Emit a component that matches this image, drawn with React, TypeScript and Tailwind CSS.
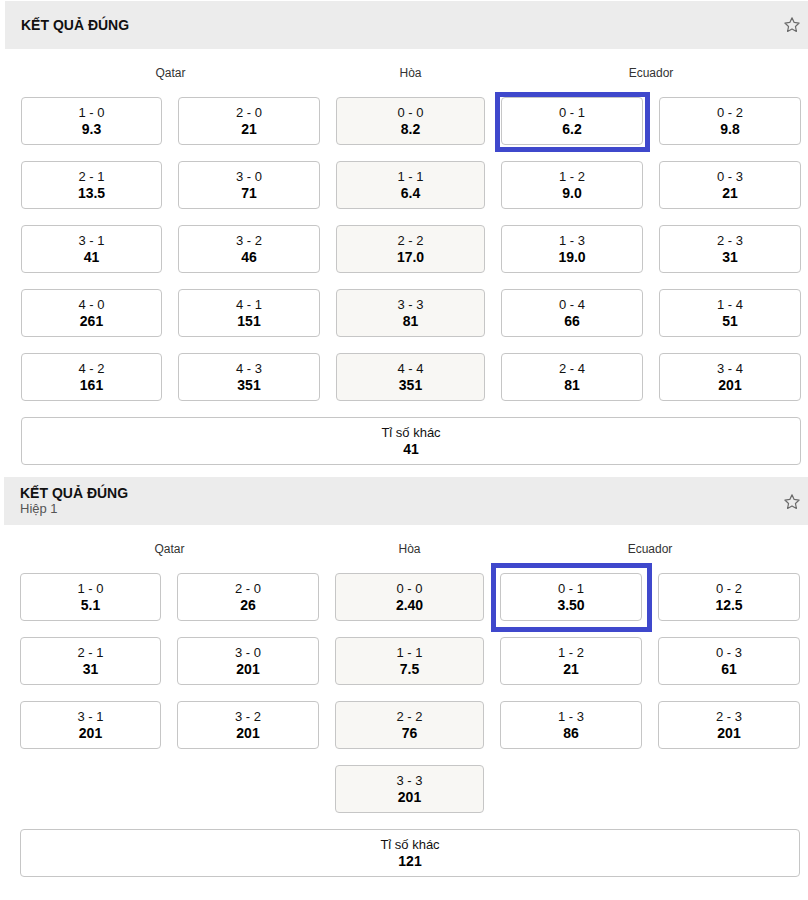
import React from "react";

type Cell = { s: string; o: string; draw?: boolean; sel?: 1 | 2; empty?: boolean };

const Star = () => (
  <svg width="18" height="18" viewBox="0 0 24 24" fill="none" stroke="#6b6b6b" strokeWidth="1.6" strokeLinejoin="round">
    <path d="M12 2.5l2.9 6.1 6.6.8-4.9 4.6 1.3 6.6L12 17.3l-5.9 3.3 1.3-6.6-4.9-4.6 6.6-.8z" />
  </svg>
);

const COLS = "grid grid-cols-[141px_142px_149px_142px_142px] gap-x-[16px]";

function OddCell({ c }: { c: Cell }) {
  if (c.empty) return <div />;
  return (
    <div
      className={
        "relative h-[48px] rounded-[4px] border border-[#c6c6c6] flex flex-col items-center justify-center " +
        (c.draw ? "bg-[#f8f7f4]" : "bg-white")
      }
    >
      {c.sel === 1 && (
        <span className="absolute left-[-7px] top-[-6px] right-[-8px] bottom-[-8px] border-[5px] border-[#3f48cc] pointer-events-none" />
      )}
      {c.sel === 2 && (
        <span className="absolute left-[-10px] top-[-11px] right-[-11px] bottom-[-12px] border-[5px] border-[#3f48cc] pointer-events-none" />
      )}
      <div className="text-[13px] leading-[16px] text-[#111]">{c.s}</div>
      <div className="text-[14px] leading-[16px] font-bold text-black">{c.o}</div>
    </div>
  );
}

function Section({
  sub,
  rows,
  other,
  padL,
}: {
  sub?: string;
  rows: Cell[][];
  other: string;
  padL: string;
}) {
  return (
    <div className={padL}>
      <div className="h-[48px] bg-[#ececec] flex items-center justify-between pl-[16px] pr-[7px]">
        <div className="flex flex-col">
          <div className="text-[14px] leading-[16px] font-bold text-[#111]">KẾT QUẢ ĐÚNG</div>
          {sub && <div className="text-[13px] leading-[16px] text-[#555]">{sub}</div>}
        </div>
        <div className={sub ? "mt-[1px]" : "-mt-[1px]"}>
          <Star />
        </div>
      </div>
      <div className="pl-[16px]">
        <div className={COLS + " h-[48px] items-center text-[12px] text-[#333]"}>
          <div className="col-span-2 text-center">Qatar</div>
          <div className="text-center">Hòa</div>
          <div className="col-span-2 text-center">Ecuador</div>
        </div>
        <div className={COLS + " gap-y-[16px]"}>
          {rows.flat().map((c, i) => (
            <OddCell key={i} c={c} />
          ))}
        </div>
        <div className="mt-[16px] w-[780px] h-[48px] rounded-[4px] border border-[#c6c6c6] bg-white flex flex-col items-center justify-center">
          <div className="text-[13px] leading-[16px] text-[#111]">Tỉ số khác</div>
          <div className="text-[14px] leading-[16px] font-bold text-black">{other}</div>
        </div>
      </div>
    </div>
  );
}

const r = (s: string, o: string, extra: Partial<Cell> = {}): Cell => ({ s, o, ...extra });
const E: Cell = { s: "", o: "", empty: true };

export default function App() {
  const rows1: Cell[][] = [
    [r("1 - 0", "9.3"), r("2 - 0", "21"), r("0 - 0", "8.2", { draw: true }), r("0 - 1", "6.2", { sel: 1 }), r("0 - 2", "9.8")],
    [r("2 - 1", "13.5"), r("3 - 0", "71"), r("1 - 1", "6.4", { draw: true }), r("1 - 2", "9.0"), r("0 - 3", "21")],
    [r("3 - 1", "41"), r("3 - 2", "46"), r("2 - 2", "17.0", { draw: true }), r("1 - 3", "19.0"), r("2 - 3", "31")],
    [r("4 - 0", "261"), r("4 - 1", "151"), r("3 - 3", "81", { draw: true }), r("0 - 4", "66"), r("1 - 4", "51")],
    [r("4 - 2", "161"), r("4 - 3", "351"), r("4 - 4", "351", { draw: true }), r("2 - 4", "81"), r("3 - 4", "201")],
  ];
  const rows2: Cell[][] = [
    [r("1 - 0", "5.1"), r("2 - 0", "26"), r("0 - 0", "2.40", { draw: true }), r("0 - 1", "3.50", { sel: 2 }), r("0 - 2", "12.5")],
    [r("2 - 1", "31"), r("3 - 0", "201"), r("1 - 1", "7.5", { draw: true }), r("1 - 2", "21"), r("0 - 3", "61")],
    [r("3 - 1", "201"), r("3 - 2", "201"), r("2 - 2", "76", { draw: true }), r("1 - 3", "86"), r("2 - 3", "201")],
    [E, E, r("3 - 3", "201", { draw: true }), E, E],
  ];
  return (
    <div className="w-[808px] min-h-[900px] bg-white font-['Liberation_Sans',Arial,sans-serif] pt-[1px] overflow-hidden">
      <Section rows={rows1} other="41" padL="pl-[5px]" />
      <div className="h-[12px]" />
      <Section sub="Hiệp 1" rows={rows2} other="121" padL="pl-[4px]" />
    </div>
  );
}
